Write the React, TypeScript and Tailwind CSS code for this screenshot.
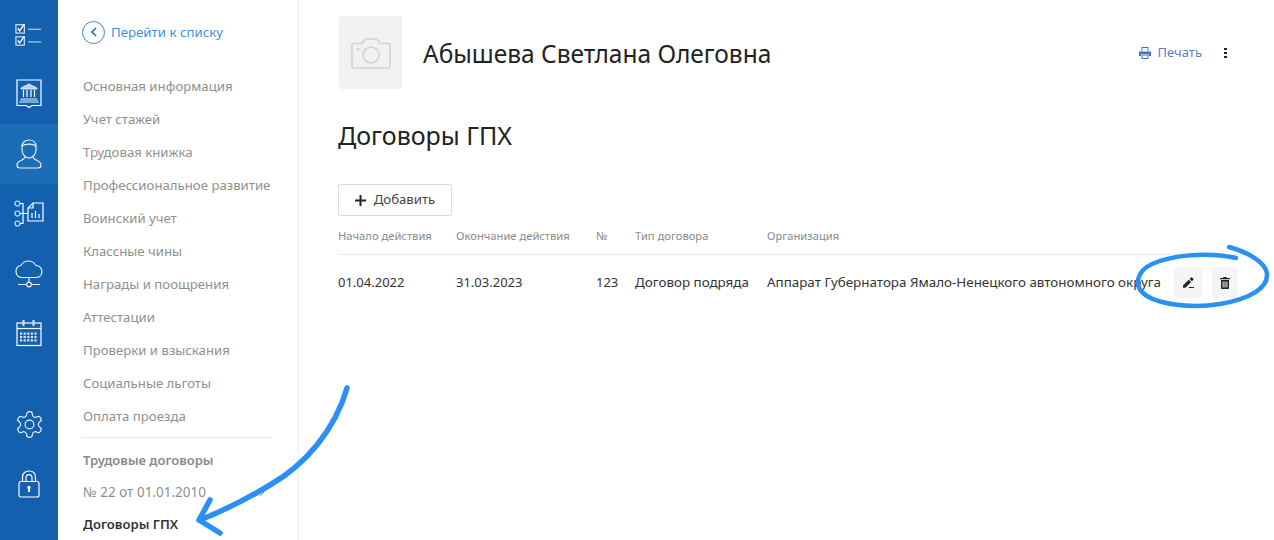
import React from "react";

const F = "[font-family:'Noto_Sans','Open_Sans',sans-serif]";

function RailIcon({ active, children }: { active?: boolean; children: React.ReactNode }) {
  return (
    <div className={`h-[60px] flex items-center justify-center ${active ? "bg-[#1b6eb5]" : ""}`}>
      {children}
    </div>
  );
}

const s = { fill: "none", stroke: "#fff", strokeWidth: 1.2 } as const;

function IconChecklist() {
  return (
    <svg width="28" height="26" viewBox="0 0 30 26" {...s} stroke="#cfe0f2">
      <rect x="1" y="3" width="9" height="9" strokeWidth="1.3" />
      <path d="M3 7l2 2.5 5-7" strokeWidth="1.5" stroke="#fff" />
      <path d="M14 8h14" stroke="#9dbfe0" strokeWidth="1.5" />
      <rect x="1" y="16" width="9" height="9" strokeWidth="1.3" />
      <path d="M3 20l2 2.5 5-7" strokeWidth="1.5" stroke="#fff" />
      <path d="M14 21.500h14" stroke="#9dbfe0" strokeWidth="1.5" />
    </svg>
  );
}
function IconBank() {
  return (
    <svg width="26" height="30" viewBox="0 0 26 30" {...s}>
      <path d="M1 1h24v25.500h-9l-3 2-3-2H1z" />
      <path d="M5 9l8-4 8 4v1H5z" fill="#b9d0e8" stroke="#fff" strokeWidth="0.8" />
      <path d="M7.500 11v7M11 11v7M15 11v7M18.500 11v7" strokeWidth="1.2" />
      <path d="M5 19h16l2 5H3z" fill="#7fa8d4" stroke="none" />
    </svg>
  );
}
function IconPerson() {
  return (
    <svg width="26" height="30" viewBox="0 0 26 30" {...s} stroke="#e6eff8">
      <path d="M6 7.500C6 3.500 9 1 13 1s7 2.500 7 6.500v3c0 4.500-3 8.500-7 8.500s-7-4-7-8.500z" />
      <path d="M6 7c3-2.500 11-2.500 14 0" />
      <path d="M9 17.500c0 2-2 3-4 4-2.200 1-4 2-4 4.500 0 2 1 3 3 3h18c2 0 3-1 3-3 0-2.500-1.800-3.500-4-4.500-2-1-4-2-4-4" />
    </svg>
  );
}
function IconOrg() {
  return (
    <svg width="30" height="28" viewBox="0 0 30 28" {...s}>
      <circle cx="3.500" cy="3.500" r="2.500" stroke="#cfe0f2" />
      <circle cx="3.500" cy="13.500" r="2.500" stroke="#cfe0f2" />
      <circle cx="3.500" cy="23.500" r="2.500" stroke="#cfe0f2" />
      <path d="M6 3.500h3v20H6M6 13.500h8" />
      <path d="M19 3h10v18H14V8z" />
      <path d="M19 3v5h-5" />
      <path d="M18 18v-5M21.500 18v-7M25 18v-4" />
    </svg>
  );
}
function IconCloud() {
  return (
    <svg width="28" height="28" viewBox="0 0 28 28" {...s} stroke="#e6eff8">
      <path d="M7 17.500C3.500 17.500 1 15 1 11.500c0-3 2-5.500 5-6C7.500 2.500 10 1 13.500 1c3.500 0 6 2 7.500 4.500 3.500 0 6 2.800 6 6 0 3.500-2.500 6-6 6z" />
      <path d="M14 17.500V22" />
      <path d="M3 24.500h8.500M16.500 24.500H25" />
      <circle cx="14" cy="24.500" r="2.300" />
    </svg>
  );
}
function IconCalendar() {
  const dots: number[][] = [];
  for (let r = 0; r < 3; r++) for (let c = 0; c < 5; c++) dots.push([4 + c * 3.6, 12.5 + r * 3.4]);
  return (
    <svg width="26" height="28" viewBox="0 0 26 28" {...s}>
      <rect x="1" y="3" width="24" height="22.500" />
      <path d="M1 8.500h24" />
      <path d="M7.500 0v6M17.500 0v6" strokeWidth="2" stroke="#dbe7f4" />
      {dots.map(([x, y], i) => (
        <rect key={i} x={x} y={y} width="2.200" height="2.200" fill="#dbe7f4" stroke="none" />
      ))}
    </svg>
  );
}
function IconGear() {
  return (
    <svg width="31" height="31" viewBox="0 0 24 24" fill="none" stroke="#e6eff8" strokeWidth="0.9">
      <path d="M12.220 2h-.440a2 2 0 0 0-2 2v.180a2 2 0 0 1-1 1.730l-.430.250a2 2 0 0 1-2 0l-.150-.080a2 2 0 0 0-2.730.730l-.220.380a2 2 0 0 0 .730 2.730l.150.100a2 2 0 0 1 1 1.720v.510a2 2 0 0 1-1 1.740l-.150.090a2 2 0 0 0-.730 2.730l.220.380a2 2 0 0 0 2.730.730l.150-.080a2 2 0 0 1 2 0l.430.250a2 2 0 0 1 1 1.730V20a2 2 0 0 0 2 2h.440a2 2 0 0 0 2-2v-.180a2 2 0 0 1 1-1.730l.430-.250a2 2 0 0 1 2 0l.150.080a2 2 0 0 0 2.730-.730l.220-.390a2 2 0 0 0-.730-2.730l-.150-.080a2 2 0 0 1-1-1.740v-.500a2 2 0 0 1 1-1.740l.150-.090a2 2 0 0 0 .730-2.730l-.220-.380a2 2 0 0 0-2.730-.730l-.150.080a2 2 0 0 1-2 0l-.430-.250a2 2 0 0 1-1-1.730V4a2 2 0 0 0-2-2z" />
      <circle cx="12" cy="12" r="3.400" />
    </svg>
  );
}
function IconLock() {
  return (
    <svg width="22" height="28" viewBox="0 0 22 28" {...s}>
      <path d="M4.500 11.500V7.500C4.500 3.500 7 1 11 1s6.500 2.500 6.500 6.500v4" />
      <path d="M8 11.500V8c0-2 1.300-3.300 3-3.300s3 1.300 3 3.300v3.500" />
      <rect x="1" y="11.500" width="20" height="15.500" rx="2" />
      <circle cx="11" cy="17.500" r="1.700" fill="#fff" stroke="none" />
      <path d="M11 18v4" strokeWidth="1.800" />
    </svg>
  );
}

const items = [
  "Основная информация",
  "Учет стажей",
  "Трудовая книжка",
  "Профессиональное развитие",
  "Воинский учет",
  "Классные чины",
  "Награды и поощрения",
  "Аттестации",
  "Проверки и взыскания",
  "Социальные льготы",
  "Оплата проезда",
];

const cols = "grid grid-cols-[118px_140px_39px_132px_1fr]";

export default function App() {
  return (
    <div className={`${F} relative flex h-[540px] w-[1274px] overflow-hidden bg-white`}>
      <nav className="w-[58px] shrink-0 bg-[#1360ae] pt-1">
        <RailIcon><IconChecklist /></RailIcon>
        <RailIcon><IconBank /></RailIcon>
        <RailIcon active><IconPerson /></RailIcon>
        <RailIcon><IconOrg /></RailIcon>
        <RailIcon><IconCloud /></RailIcon>
        <RailIcon><IconCalendar /></RailIcon>
        <div className="mt-[15px] mb-[14px] h-px bg-[#1f5c9e]" />
        <RailIcon><IconGear /></RailIcon>
        <RailIcon><IconLock /></RailIcon>
      </nav>

      <aside className="w-[241px] shrink-0 border-r border-[#ececec] pl-[24px] pr-[25px] pt-[20px]">
        <div className="flex h-[24px] items-center gap-[6px] text-[13.25px] text-[#3a93de]">
          <span className="flex h-[23px] w-[23px] items-center justify-center rounded-full border border-[#3a88c8]">
            <svg width="8" height="10" viewBox="0 0 8 10" fill="none" stroke="#1b6eb5" strokeWidth="1.600"><path d="M6 1L2 5l4 4" /></svg>
          </span>
          <span className="mt-[2px]">Перейти к списку</span>
        </div>
        <ul className="mt-[26px] pl-px">
          {items.map((t) => (
            <li key={t} className="flex h-[33px] items-center text-[13.2px] text-[#8f8f8f]">{t}</li>
          ))}
        </ul>
        <div className="mt-[4px] h-px w-[190px] bg-[#e8e8e8]" />
        <div className="mt-[12px] flex h-[22px] items-center pl-px text-[13px] font-semibold text-[#8a8a8a]">Трудовые договоры</div>
        <div className="mt-[9px] flex h-[22px] items-center justify-between pl-px pr-[8px] text-[13.5px] text-[#8f8f8f]">
          № 22 от 01.01.2010
          <svg width="6" height="10" viewBox="0 0 6 10" fill="none" stroke="#8f8f8f" strokeWidth="1"><path d="M1 1l4 4-4 4" /></svg>
        </div>
        <div className="mt-[11px] flex h-[22px] items-center pl-px text-[13.1px] font-semibold text-[#333]">Договоры ГПХ</div>
      </aside>

      <main className="min-w-0 flex-1 pl-[40px] pr-[34px] pt-[16px]">
        <header className="-ml-px flex items-start">
          <div className="ml-px flex h-[73px] w-[63px] items-center justify-center rounded-[3px] bg-[#f1f1f1]">
            <svg width="40" height="32" viewBox="0 0 40 32" fill="none" stroke="#d2d2d2" strokeWidth="1.600">
              <path d="M2.500 6.500H11l3-4.500h12l3 4.500h8.500a1.500 1.500 0 0 1 1.500 1.500v22a1 1 0 0 1-1 1H2a1 1 0 0 1-1-1V8a1.500 1.500 0 0 1 1.500-1.500z" />
              <circle cx="20" cy="18" r="8" />
              <circle cx="7" cy="12" r="1.500" fill="#d2d2d2" stroke="none" />
            </svg>
          </div>
          <h1 className="ml-[21px] mt-[19px] text-[24.5px] leading-[38px] text-[#222]">Абышева Светлана Олеговна</h1>
          <div className="ml-auto mt-[28px] flex h-[18px] items-center">
            <svg width="12" height="12" viewBox="0 0 12 12" fill="#3d74c0">
              <path d="M2.500 0h7v4h-7zM3.500 1v3h5V1z" fillRule="evenodd" />
              <path d="M0 4.500h12V9h-2V7H2v2H0z" />
              <path d="M2.500 7.500h7V12h-7zM3.500 8.500V11h5V8.500z" fillRule="evenodd" />
            </svg>
            <span className="ml-[7px] text-[13px] text-[#5b7fc4]">Печать</span>
            <span className="ml-[22px] mr-[13px] flex flex-col gap-[2px]">
              <i className="block h-[2px] w-[3px] bg-[#222]" />
              <i className="block h-[2px] w-[3px] bg-[#222]" />
              <i className="block h-[2px] w-[3px] bg-[#222]" />
            </span>
          </div>
        </header>

        <h2 className="-ml-px mt-[27px] text-[25px] leading-[38px] text-[#222]">Договоры ГПХ</h2>

        <button className="-ml-px mt-[30px] flex h-[32px] w-[114px] items-center justify-center gap-[8px] rounded-[2px] border border-[#dcdcdc] text-[13.2px] text-[#444]">
          <svg width="11" height="11" viewBox="0 0 11 11" stroke="#222" strokeWidth="2"><path d="M5.500 0v11M0 5.500h11" /></svg>
          Добавить
        </button>

        <div className={`${cols} -ml-px h-[39px] items-center border-b border-[#e9e9e9] pt-[2px] text-[11.2px] text-[#8a8a8a]`}>
          <span>Начало действия</span>
          <span>Окончание действия</span>
          <span>№</span>
          <span>Тип договора</span>
          <span>Организация</span>
        </div>
        <div className={`${cols} -ml-px h-[55px] items-center text-[13.4px] text-[#333]`}>
          <span className="text-[13px]">01.04.2022</span>
          <span className="text-[13px]">31.03.2023</span>
          <span className="text-[13px]">123</span>
          <span>Договор подряда</span>
          <span className="flex items-center justify-between">
            <span>Аппарат Губернатора Ямало-Ненецкого автономного округа</span>
            <span className="mr-[2px] flex items-center gap-[10px]">
              <span className="flex h-[31px] w-[28px] items-center justify-center rounded-[4px] bg-[#f5f5f5]">
                <svg width="11" height="11" viewBox="0 0 11 11" fill="#222">
                  <path d="M0 8.500L5.800 2.700 8.100 5 2.300 10.800H0z" />
                  <path d="M6.600 1.900L8 .5a.7.7 0 0 1 1 0l1.300 1.300a.7.7 0 0 1 0 1L8.900 4.200z" />
                  <path d="M6 10h5v1H6z" />
                </svg>
              </span>
              <span className="flex h-[31px] w-[26px] items-center justify-center rounded-[4px] bg-[#f5f5f5]">
                <svg width="10" height="12" viewBox="0 0 10 12" fill="#222">
                  <path d="M3.500 0h3l.5 1h3v1.200H0V1h3z" />
                  <path d="M1 3h8v8a1 1 0 0 1-1 1H2a1 1 0 0 1-1-1zm1.600 1.500v6h1v-6zm1.900 0v6h1v-6zm1.900 0v6h1v-6z" fillRule="evenodd" />
                </svg>
              </span>
            </span>
          </span>
        </div>
      </main>

      <svg className="pointer-events-none absolute left-0 top-0" width="1274" height="540" fill="none" stroke="#2a90f3" strokeLinecap="round" strokeLinejoin="round">
        <path strokeWidth="4.500" d="M1236 258C1205 251 1170 256 1152 264C1137 271 1134 285 1143 293C1155 304 1190 309 1220 304C1250 299 1268 288 1267 274C1266 262 1247 252 1229 247" />
        <path strokeWidth="5.500" d="M347 388C335 430 305 465 270 485C245 500 220 512 200 520" />
        <path strokeWidth="5.500" d="M210 500L199 520L220 533" />
      </svg>
    </div>
  );
}
